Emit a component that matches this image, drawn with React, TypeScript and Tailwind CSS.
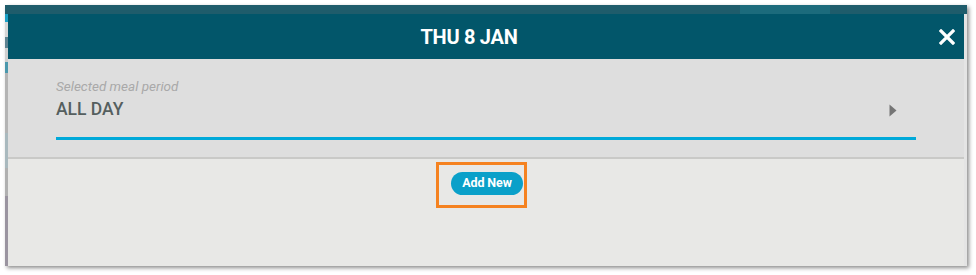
import * as React from "react";

// Left edge of the page behind the modal: a few coloured slivers.
const leftStrip = [
  { h: "h-[8px]", c: "bg-[#1a9fc6]" },
  { h: "h-[15px]", c: "bg-[#d6d6d6]" },
  { h: "h-[11px]", c: "bg-[#5d8391]" },
  { h: "h-[14px]", c: "bg-[#cfcfcf]" },
  { h: "h-[11px]", c: "bg-[#4b98ad]" },
  { h: "h-[60px]", c: "bg-[#b4b4b4]" },
  { h: "h-[35px]", c: "bg-[#a9b9be]" },
  { h: "h-[28px]", c: "bg-[#b0b0b0]" },
  { h: "h-[70px]", c: "bg-[#9a94a0]" },
];

export default function App() {
  return (
    <div className="h-[275px] w-[976px] overflow-hidden bg-white pl-[5px] pt-[5px] font-['Roboto',sans-serif]">
      <div className="flex h-[261px] w-[962px] flex-col shadow-[2px_2px_4px_rgba(0,0,0,0.45)]">
        {/* page behind, top sliver */}
        <div className="flex h-[9px] shrink-0 bg-[#1f5c6b]">
          <div className="w-[735px]" />
          <div className="w-[90px] bg-[#1c6b7c]" />
        </div>
        <div className="flex min-h-0 flex-1">
          <div className="flex w-[3px] shrink-0 flex-col">
            {leftStrip.map((s, i) => (
              <div key={i} className={`${s.h} ${s.c} shrink-0`} />
            ))}
          </div>

          {/* modal */}
          <div className="flex min-w-0 flex-1 flex-col">
            <div className="relative flex h-[45px] shrink-0 items-center justify-center bg-[#02566a] pr-[34px]">
              <h1 className="text-[20px] font-bold tracking-[-0.3px] text-white">THU 8 JAN</h1>
              <button type="button" aria-label="Close" className="absolute right-[9px] top-[15px] text-white">
                <svg width="16" height="16" viewBox="0 0 16 16">
                  <path d="M2 2 L14 14 M14 2 L2 14" stroke="currentColor" strokeWidth="3.2" strokeLinecap="square" />
                </svg>
              </button>
            </div>

            <div className="h-[100px] shrink-0 border-b-2 border-[#c9c9c7] bg-[#dedede] pl-[48px] pr-[48px] pt-[19px]">
              <div className="text-[13.5px] italic leading-[16px] text-[#a9a9a9]">Selected meal period</div>
              <div className="flex items-center justify-between border-b-[3px] border-[#00a9d9] pb-[17px] pt-[4px]">
                <span className="text-[17.5px] font-medium leading-[22px] text-[#555f5f]">ALL DAY</span>
                <svg width="8" height="13" viewBox="0 0 8 13" className="mr-[19px] mt-[2px]">
                  <path d="M0.5 0.5 L7.5 6.5 L0.5 12.5 Z" fill="#757575" />
                </svg>
              </div>
            </div>

            <div className="flex flex-1 justify-center bg-[#e8e8e6] pt-[3px]">
              {/* highlight box round the button */}
              <div className="ml-[-9px] flex h-[46px] w-[91px] items-start border-[3px] border-[#f58220] pl-[12px] pt-[7px]">
                <button
                  type="button"
                  className="h-[23px] w-[72px] rounded-full bg-[#0aa0c9] text-[12.5px] font-bold tracking-[-0.1px] text-white"
                >
                  Add New
                </button>
              </div>
            </div>
          </div>

          <div className="w-[3px] shrink-0 bg-[#e4e4e4]" />
        </div>
      </div>
    </div>
  );
}
